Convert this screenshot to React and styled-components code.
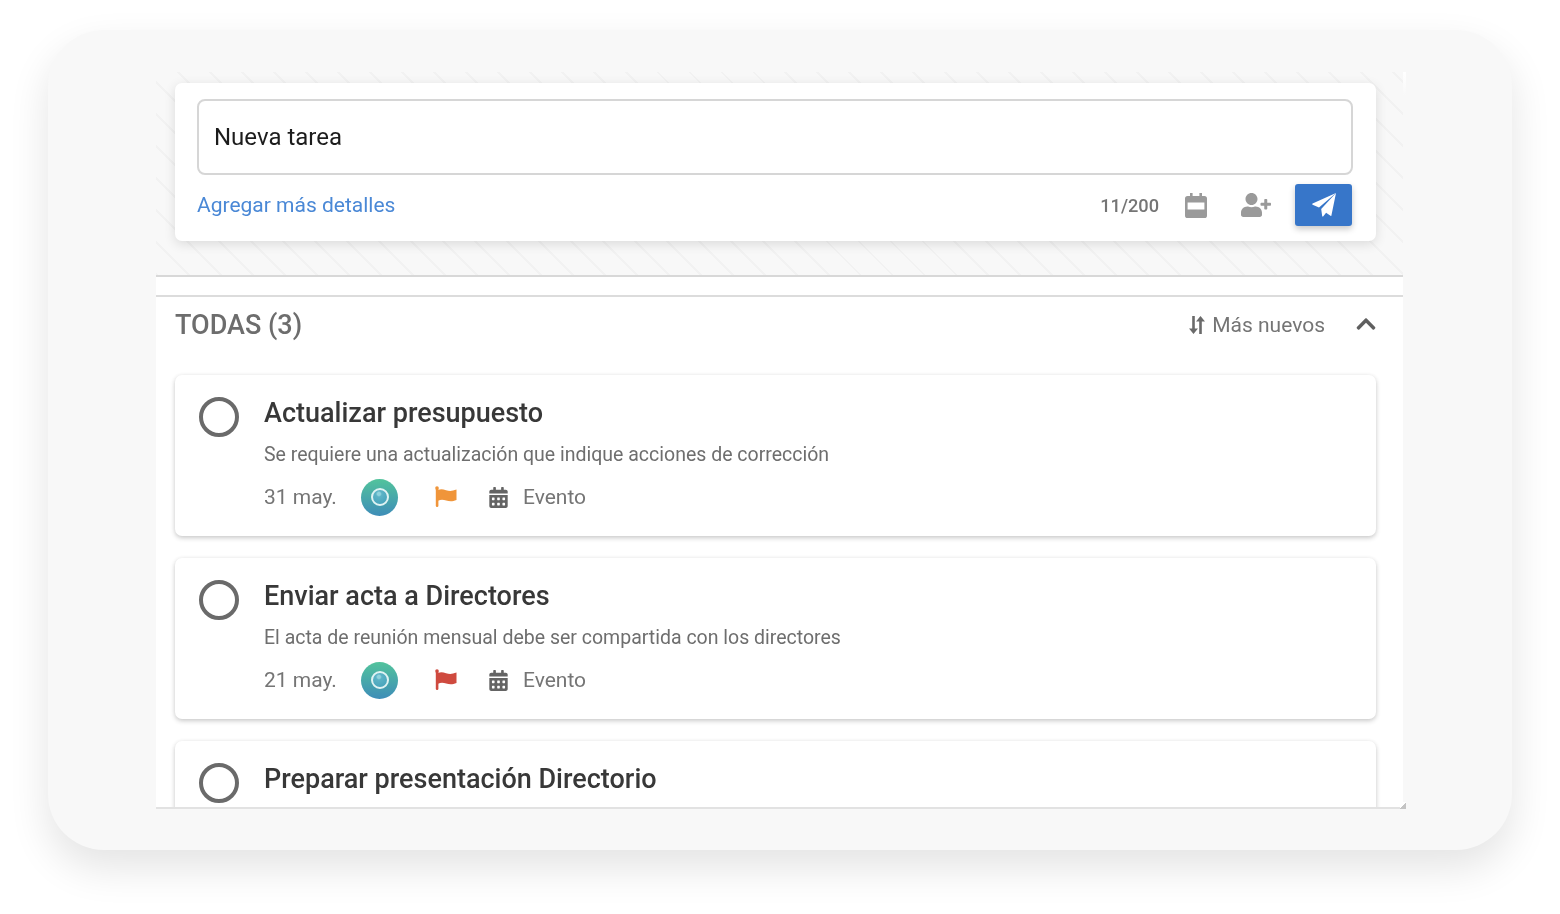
import React from "react";
import styled, { createGlobalStyle } from "styled-components";
import { FaUserPlus, FaCalendarAlt, FaChevronUp } from "react-icons/fa";

const Global = createGlobalStyle`
  html, body { margin: 0; padding: 0; background: #fff; }
  body { font-family: Roboto, "Liberation Sans", sans-serif; height: 914px; overflow: hidden; }
`;

const Frame = styled.div`
  margin: 30px 48px 0;
  height: 820px;
  box-sizing: border-box;
  padding: 42px 109px 0 108px;
  background: #f8f8f8;
  border-radius: 56px;
  box-shadow: 0 18px 40px rgba(0, 0, 0, 0.11);
`;

const Panel = styled.div`
  position: relative;
  height: 737px;
  width: 1247px;
  filter: blur(0.4px);
  &::before {
    content: "";
    position: absolute;
    right: -3px;
    top: 0;
    width: 3px;
    height: 24px;
    background: linear-gradient(#fff, #f8f8f8);
  }
  &::after {
    content: "";
    position: absolute;
    right: -3px;
    bottom: 0;
    width: 6px;
    height: 7px;
    background: linear-gradient(135deg, #fff 50%, #c4c4c4 50%);
  }
`;

const Clip = styled.div`
  height: 100%;
  overflow: hidden;
  background: #fff;
  border-bottom: 2px solid #e2e2e2;
  box-sizing: border-box;
`;

const Composer = styled.section`
  height: 205px;
  box-sizing: border-box;
  padding: 11px 27px 0 19px;
  background-color: #f8f8f8;
  background-image: repeating-linear-gradient(
    45deg,
    #f2f2f2 0,
    #f2f2f2 2px,
    transparent 2px,
    transparent 22.6px
  );
  border-bottom: 2px solid #d8d8d8;
`;

const ComposerCard = styled.div`
  height: 158px;
  box-sizing: border-box;
  padding: 16px 24px 0 22px;
  background: #fff;
  border-radius: 7px;
  box-shadow: 0 3px 12px rgba(0, 0, 0, 0.12);
`;

const TitleInput = styled.div`
  height: 76px;
  box-sizing: border-box;
  display: flex;
  align-items: center;
  padding-left: 15px;
  margin-right: -1px;
  border: 2px solid #d6d6d6;
  border-radius: 8px;
  font-size: 24px;
  color: #1c1c1c;
`;

const ComposerActions = styled.div`
  display: flex;
  align-items: center;
  height: 42px;
  margin-top: 9px;
`;

const DetailsLink = styled.a`
  font-size: 21px;
  color: #4a88d6;
  margin-right: auto;
`;

const Counter = styled.span`
  font-size: 18.2px;
  font-weight: 500;
  color: #757575;
  margin-right: 26px;
`;

const GreyIcon = styled.span`
  display: flex;
  color: #9a9a9a;
  margin-right: ${(p) => p.$gap}px;
`;

const SendButton = styled.button`
  width: 57px;
  height: 42px;
  border: 0;
  border-radius: 3px;
  background: #3776c9;
  display: flex;
  align-items: center;
  justify-content: center;
  padding: 0;
  box-shadow: 0 3px 6px rgba(0, 0, 0, 0.22);
`;

const Spacer = styled.div`
  background: #fff;
  border-bottom: 2px solid #dcdcdc;
  box-sizing: border-box;
  height: 20px;
`;

const ListSection = styled.section`
  background: #fff;
  padding: 0 27px 0 19px;
`;

const ListHeader = styled.header`
  height: 56px;
  display: flex;
  align-items: center;
  justify-content: space-between;
  margin-bottom: 22px;
  margin-right: -1px;
`;

const ListTitle = styled.h2`
  margin: 0;
  font-size: 27px;
  font-weight: 500;
  color: #6d6d6d;
`;

const SortControls = styled.div`
  display: flex;
  align-items: center;
  color: #757575;
  font-size: 21px;
`;

const SortLabel = styled.span`
  margin-left: 7px;
  margin-right: 30px;
`;

const Chevron = styled.span`
  display: flex;
  margin-top: -2px;
  color: #5f5f5f;
`;

const TaskCard = styled.article`
  display: flex;
  height: 161px;
  box-sizing: border-box;
  padding: 22px 24px 0 24px;
  margin-bottom: 22px;
  background: #fff;
  border-radius: 7px;
  box-shadow: 0 2px 5px rgba(0, 0, 0, 0.2), 0 0 4px rgba(0, 0, 0, 0.04);
`;

const Check = styled.span`
  flex: none;
  width: 40px;
  height: 40px;
  box-sizing: border-box;
  border: 4px solid #6a6a6a;
  border-radius: 50%;
  margin-right: 25px;
`;

const TaskBody = styled.div`
  min-width: 0;
`;

const TaskTitle = styled.h3`
  margin: 0;
  font-size: 27px;
  line-height: 32px;
  font-weight: 500;
  color: #383838;
`;

const TaskDesc = styled.p`
  margin: 13px 0 0;
  font-size: 19.5px;
  line-height: 26px;
  color: #6e6e6e;
`;

const Meta = styled.div`
  display: flex;
  align-items: center;
  margin-top: 11px;
  height: 36px;
  font-size: 21px;
  color: #757575;
`;

const DateText = styled.span`
  width: 97px;
`;

const Avatar = styled.span`
  width: 37px;
  height: 37px;
  flex: none;
  border-radius: 50%;
  display: flex;
  align-items: center;
  justify-content: center;
  background: linear-gradient(#52c39c, #3e8db8);
`;

const AvatarLens = styled.span`
  width: 18px;
  height: 18px;
  box-sizing: border-box;
  border-radius: 50%;
  border: 2px solid #dff3f3;
  background: radial-gradient(circle at 42% 28%, #8fd2dc 0 1.5px, #5cb3c6 3px, #429fb8 100%);
`;

const FlagSlot = styled.span`
  display: flex;
  margin-left: 37px;
  margin-right: 31px;
`;

const EventIcon = styled.span`
  display: flex;
  color: #646464;
  margin-right: 14px;
`;

function SortArrows() {
  return (
    <svg width="16" height="20" viewBox="0 0 16 20" fill="#6a6a6a">
      <path d="M3.2 1h2.6v12.5H9L4.5 19 0 13.5h3.2z" />
      <path d="M10.2 19V6.5H7L11.5 1 16 6.5h-3.2V19z" />
    </svg>
  );
}

function CalendarBand() {
  return (
    <svg width="22" height="25" viewBox="0 0 22 25" fill="#9a9a9a">
      <path
        fillRule="evenodd"
        d="M5 0h2.6v3h6.8V0H17v3h2.4A2.6 2.6 0 0 1 22 5.6v16.8a2.6 2.6 0 0 1-2.6 2.6H2.6A2.6 2.6 0 0 1 0 22.4V5.6A2.6 2.6 0 0 1 2.6 3H5zM2.6 9.5v7h16.8v-7z"
      />
    </svg>
  );
}

function PlaneIcon() {
  return (
    <svg width="24" height="24" viewBox="0 0 24 24" fill="#fff">
      <path d="M24 0 0.6 10.6a.6.6 0 0 0 0 1.1L7 14.6z" />
      <path d="M24 0 9.2 16l1 7.2a.5.5 0 0 0 .9.2l3-3.6 4.4 3a.6.6 0 0 0 .9-.4z" />
    </svg>
  );
}

function WaveFlag({ color }) {
  return (
    <svg width="22" height="22" viewBox="0 0 22 22" fill={color}>
      <circle cx="2" cy="2" r="1.8" />
      <rect x="0.8" y="2" width="2.6" height="19" rx="1.2" />
      <path d="M3 4c3-1.4 5-.8 8 .2 3.2 1 6 1.1 10.5-.6V14c-4 1.8-7 1.6-10.3.6-3-.9-5.2-1.2-8.2.2z" />
    </svg>
  );
}

const tasks = [
  { title: "Actualizar presupuesto", desc: "Se requiere una actualización que indique acciones de corrección", date: "31 may.", flag: "#f0953a" },
  { title: "Enviar acta a Directores", desc: "El acta de reunión mensual debe ser compartida con los directores", date: "21 may.", flag: "#cf4a3f" },
  { title: "Preparar presentación Directorio" },
];

export default function App() {
  return (
    <>
      <Global />
      <Frame>
        <Panel>
          <Clip>
            <Composer>
              <ComposerCard>
                <TitleInput>Nueva tarea</TitleInput>
                <ComposerActions>
                  <DetailsLink>Agregar más detalles</DetailsLink>
                  <Counter>11/200</Counter>
                  <GreyIcon $gap={34}><CalendarBand /></GreyIcon>
                  <GreyIcon $gap={24}><FaUserPlus size={30} /></GreyIcon>
                  <SendButton aria-label="Enviar"><PlaneIcon /></SendButton>
                </ComposerActions>
              </ComposerCard>
            </Composer>
            <Spacer />
            <ListSection>
              <ListHeader>
                <ListTitle>TODAS (3)</ListTitle>
                <SortControls>
                  <SortArrows />
                  <SortLabel>Más nuevos</SortLabel>
                  <Chevron><FaChevronUp size={22} /></Chevron>
                </SortControls>
              </ListHeader>
              {tasks.map((t) => (
                <TaskCard key={t.title}>
                  <Check />
                  <TaskBody>
                    <TaskTitle>{t.title}</TaskTitle>
                    {t.desc && <TaskDesc>{t.desc}</TaskDesc>}
                    {t.date && (
                      <Meta>
                        <DateText>{t.date}</DateText>
                        <Avatar><AvatarLens /></Avatar>
                        <FlagSlot><WaveFlag color={t.flag} /></FlagSlot>
                        <EventIcon><FaCalendarAlt size={21} /></EventIcon>
                        Evento
                      </Meta>
                    )}
                  </TaskBody>
                </TaskCard>
              ))}
            </ListSection>
          </Clip>
        </Panel>
      </Frame>
    </>
  );
}
